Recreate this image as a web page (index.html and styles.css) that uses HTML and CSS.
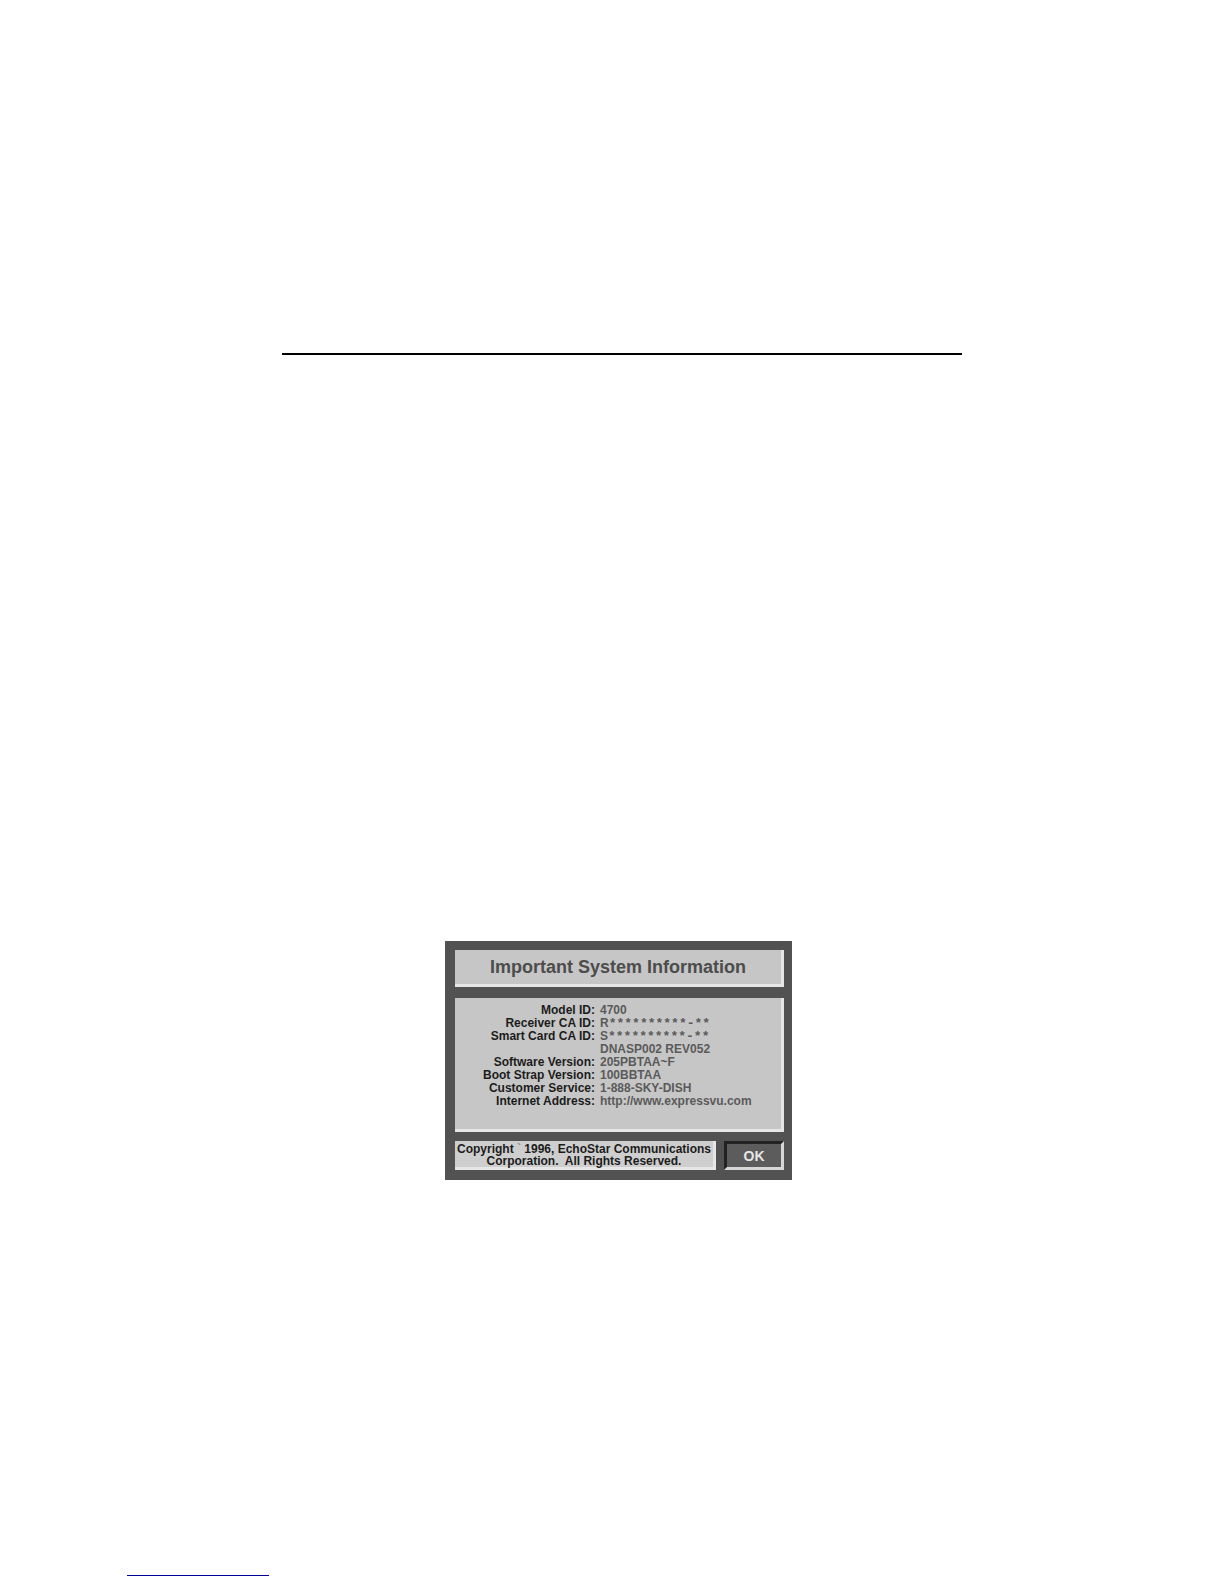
FILE: index.html
```html
<!DOCTYPE html>
<html lang="en">
<head>
  <meta charset="UTF-8">
  <meta name="viewport" content="width=device-width, initial-scale=1.0">
  <title>Important System Information</title>
  <link rel="stylesheet" href="styles.css">
</head>
<body>

  <main class="content">
    <hr class="rule">

    <!-- System Information Screen -->
    <section class="screen">
      <h1 class="panel title">Important System Information</h1>

      <div class="panel info">
        <table class="info-table">
          <tr><th scope="row">Model ID:</th><td>4700</td></tr>
          <tr><th scope="row">Receiver CA ID:</th><td>R<span class="masked">**********-**</span></td></tr>
          <tr><th scope="row">Smart Card CA ID:</th><td>S<span class="masked">**********-**</span></td></tr>
          <tr><th></th><td>DNASP002 REV052</td></tr>
          <tr><th scope="row">Software Version:</th><td>205PBTAA~F</td></tr>
          <tr><th scope="row">Boot Strap Version:</th><td>100BBTAA</td></tr>
          <tr><th scope="row">Customer Service:</th><td>1-888-SKY-DISH</td></tr>
          <tr><th scope="row">Internet Address:</th><td>http://www.expressvu.com</td></tr>
        </table>
      </div>

      <div class="bottom">
        <p class="panel copyright">Copyright <span class="mark">`</span> 1996, EchoStar Communications<br>Corporation.&nbsp; All Rights Reserved.</p>
        <button type="button" class="ok">OK</button>
      </div>
    </section>
  </main>

  <footer class="footer">
    <a href="#" class="footer-link"></a>
  </footer>

</body>
</html>
```

FILE: styles.css
```css
/* Basic Styles */
* {
  box-sizing: border-box;
}

body {
  display: flex;
  flex-direction: column;
  min-height: 100vh;
  margin: 0;
  background-color: #fff;
  font-family: "Liberation Sans", Arial, sans-serif;
}

.content {
  flex: 1;
  padding: 353px 262px 0 282px;
}

.rule {
  height: 2px;
  margin: 0 0 586px;
  border: 0;
  background-color: #000;
}

/* System Information Screen */
.screen {
  max-width: 347px;
  margin: 0 auto 0 163px;
  padding: 9px 8px 10px 10px;
  background-color: #525252;
}

.panel {
  margin: 0;
  background-color: #c6c6c6;
  border: solid #e6e6e6;
  border-width: 0 3px 3px 0;
}

.title {
  padding: 7px 0;
  color: #4c4c4c;
  font-size: 18px;
  line-height: 20px;
  text-align: center;
}

.info {
  margin-top: 11px;
  padding: 6px 0 21px;
}

/* Info Table */
.info-table {
  width: 100%;
  border-collapse: collapse;
  font-size: 12px;
  line-height: 13px;
}

.info-table tr {
  height: 13px;
}

.info-table th {
  width: 140px;
  padding: 0;
  color: #1c1c1c;
  text-align: right;
  white-space: nowrap;
}

.info-table td {
  padding: 0 0 0 5px;
  color: #5a5a5a;
  font-weight: bold;
}

.masked {
  font-family: "Liberation Mono", monospace;
  font-size: 13px;
  line-height: 1;
}

/* Bottom Row */
.bottom {
  display: flex;
  gap: 8px;
  margin-top: 9px;
}

.copyright {
  flex: 1;
  padding: 2px 0 0;
  color: #1c1c1c;
  background-color: #cecece;
  font-size: 12px;
  font-weight: bold;
  line-height: 12px;
  text-align: center;
}

.mark {
  color: #8c8c8c;
}

.ok {
  width: 60px;
  padding: 0;
  color: #e6e6e6;
  background-color: #5c5c5c;
  border: 3px solid;
  border-color: #222 #d6d6d6 #d6d6d6 #222;
  font-family: inherit;
  font-size: 14px;
  font-weight: bold;
  line-height: 16px;
}

/* Footer */
.footer {
  padding: 0 127px 8px;
}

.footer-link {
  display: block;
  max-width: 142px;
  border-bottom: 1px solid #000099;
}
```
